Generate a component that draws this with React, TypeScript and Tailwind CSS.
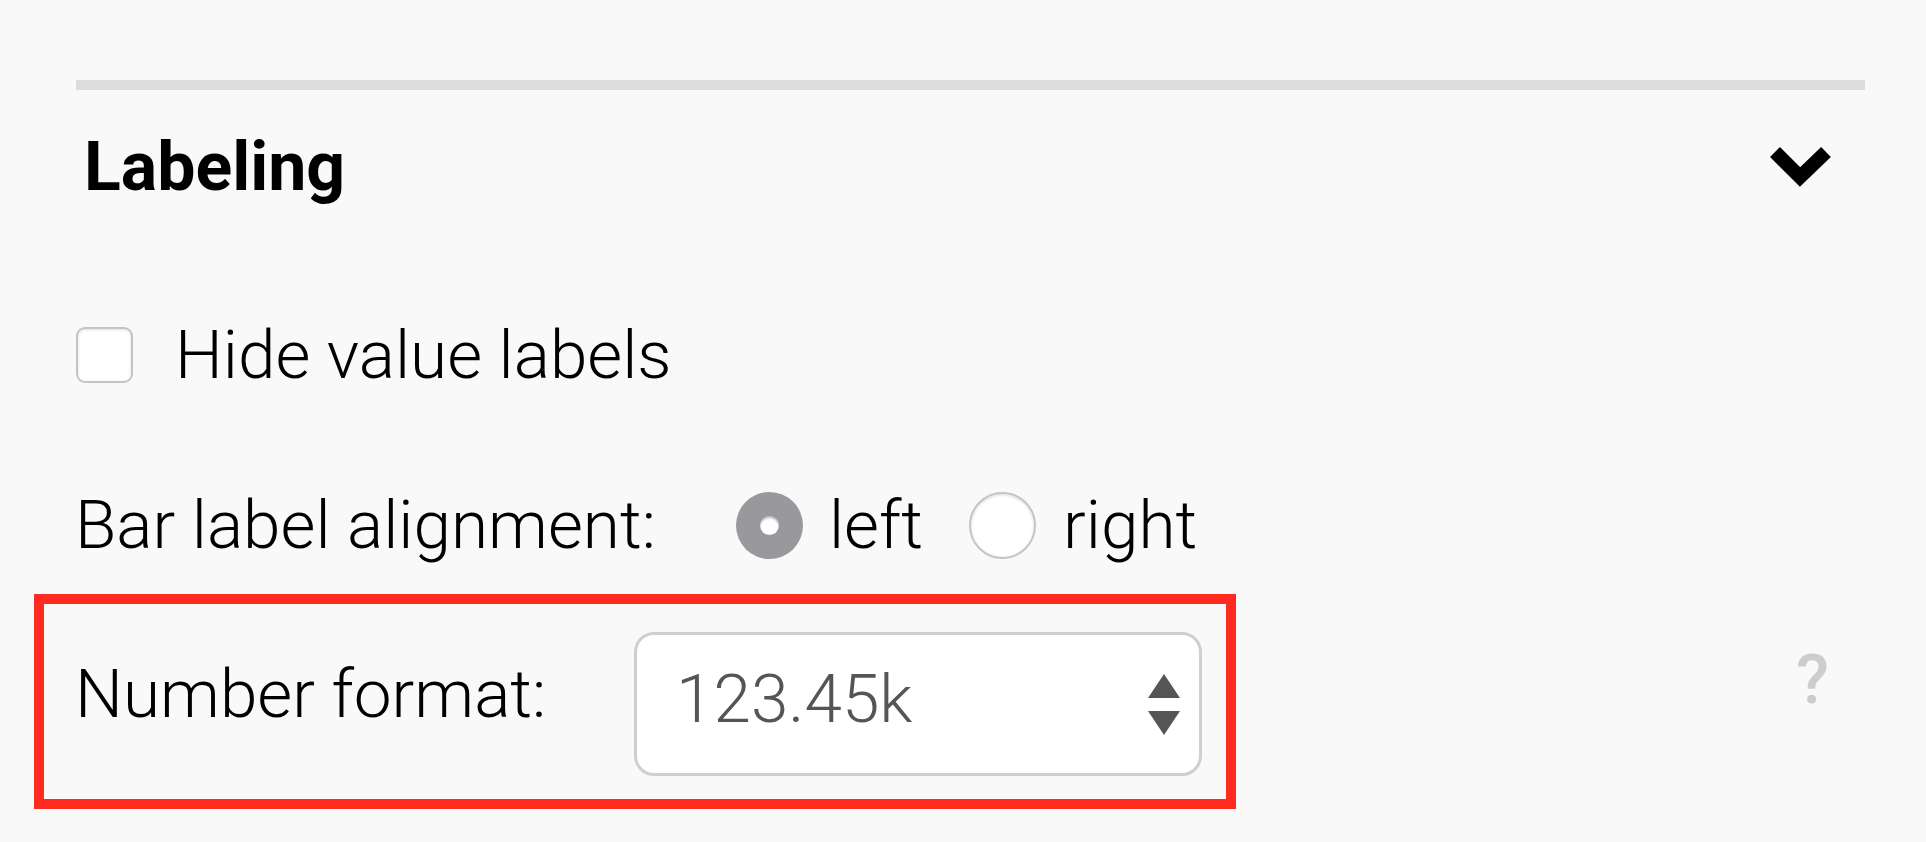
import React from 'react'

const font = { fontFamily: 'Roboto, "Noto Sans", sans-serif' }
const light = { fontFamily: '"Roboto Light", Roboto, "Noto Sans", sans-serif' }

function Chevron() {
  return (
    <svg width="66" height="48" viewBox="0 0 66 48" className="block">
      <polyline points="8,9 33,34 59,9" fill="none" stroke="#000" strokeWidth="14" strokeLinejoin="miter" strokeLinecap="butt" />
    </svg>
  )
}

function Radio({ checked }: { checked?: boolean }) {
  if (checked) {
    return (
      <span className="flex h-[67px] w-[67px] shrink-0 items-center justify-center rounded-full bg-[#99989d]">
        <span className="h-[19px] w-[19px] rounded-full bg-white shadow-[inset_0_2px_2px_rgba(0,0,0,0.25)]" />
      </span>
    )
  }
  return <span className="h-[67px] w-[67px] shrink-0 rounded-full border-2 border-[#c4c4c4] bg-white shadow-[inset_0_1px_3px_rgba(0,0,0,0.15)]" />
}

function Spinner() {
  return (
    <svg width="32" height="61" viewBox="0 0 32 61" className="block">
      <polygon points="16,0 32,24 0,24" fill="#555" />
      <polygon points="0,37 32,37 16,61" fill="#555" />
    </svg>
  )
}

export default function App() {
  return (
    <div className="min-h-screen bg-[#f9f9f9] text-black" style={font}>
      <div className="w-[1865px] pl-[76px] pt-[80px]">
        <div className="h-[10px] bg-[#dcdcdc]" />

        <div className="flex h-[154px] items-center justify-between pr-[32px]">
          <h2 className="pl-[8px] text-[68px] font-bold leading-[68px]">Labeling</h2>
          <Chevron />
        </div>

        <label className="mt-[66px] flex h-[90px] items-center" style={light}>
          <span className="h-[56px] w-[57px] rounded-[9px] border-2 border-[#c4c4c4] bg-white shadow-[inset_0_1px_3px_rgba(0,0,0,0.12)]" />
          <span className="ml-[42px] text-[67.5px] font-light leading-[68px]">Hide value labels</span>
        </label>

        <div className="mt-[80px] flex h-[90px] items-center" style={light}>
          <span className="-ml-[1px] text-[67.5px] font-light leading-[68px]">Bar label alignment:</span>
          <span className="ml-[80px] flex items-center">
            <Radio checked />
            <span className="ml-[26px] text-[67.5px] font-light leading-[68px]">left</span>
          </span>
          <span className="ml-[46px] flex items-center">
            <Radio />
            <span className="ml-[27px] text-[67.5px] font-light leading-[68px]">right</span>
          </span>
        </div>

        <div className="-ml-[42px] mt-[24px] flex items-start" style={light}>
          <div className="flex h-[215px] w-[1202px] items-start border-[10px] border-[#ff2a20]">
            <span className="pl-[31px] pt-[56px] text-[67.5px] font-light leading-[68px]">Number format:</span>
            <div className="ml-auto mr-[24px] mt-[28px] flex h-[144px] w-[568px] items-center rounded-[20px] border-[3px] border-[#cfcfcf] bg-white pl-[39px] pr-[19px]">
              <span className="-mt-[11px] text-[67.5px] font-light leading-[68px] text-[#555]">123.45k</span>
              <span className="ml-auto">
                <Spinner />
              </span>
            </div>
          </div>
          <span className="ml-auto mr-[36px] mt-[52px] text-[68px] font-medium leading-[68px] text-[#cdcdcd]" style={font}>?</span>
        </div>
      </div>
    </div>
  )
}
